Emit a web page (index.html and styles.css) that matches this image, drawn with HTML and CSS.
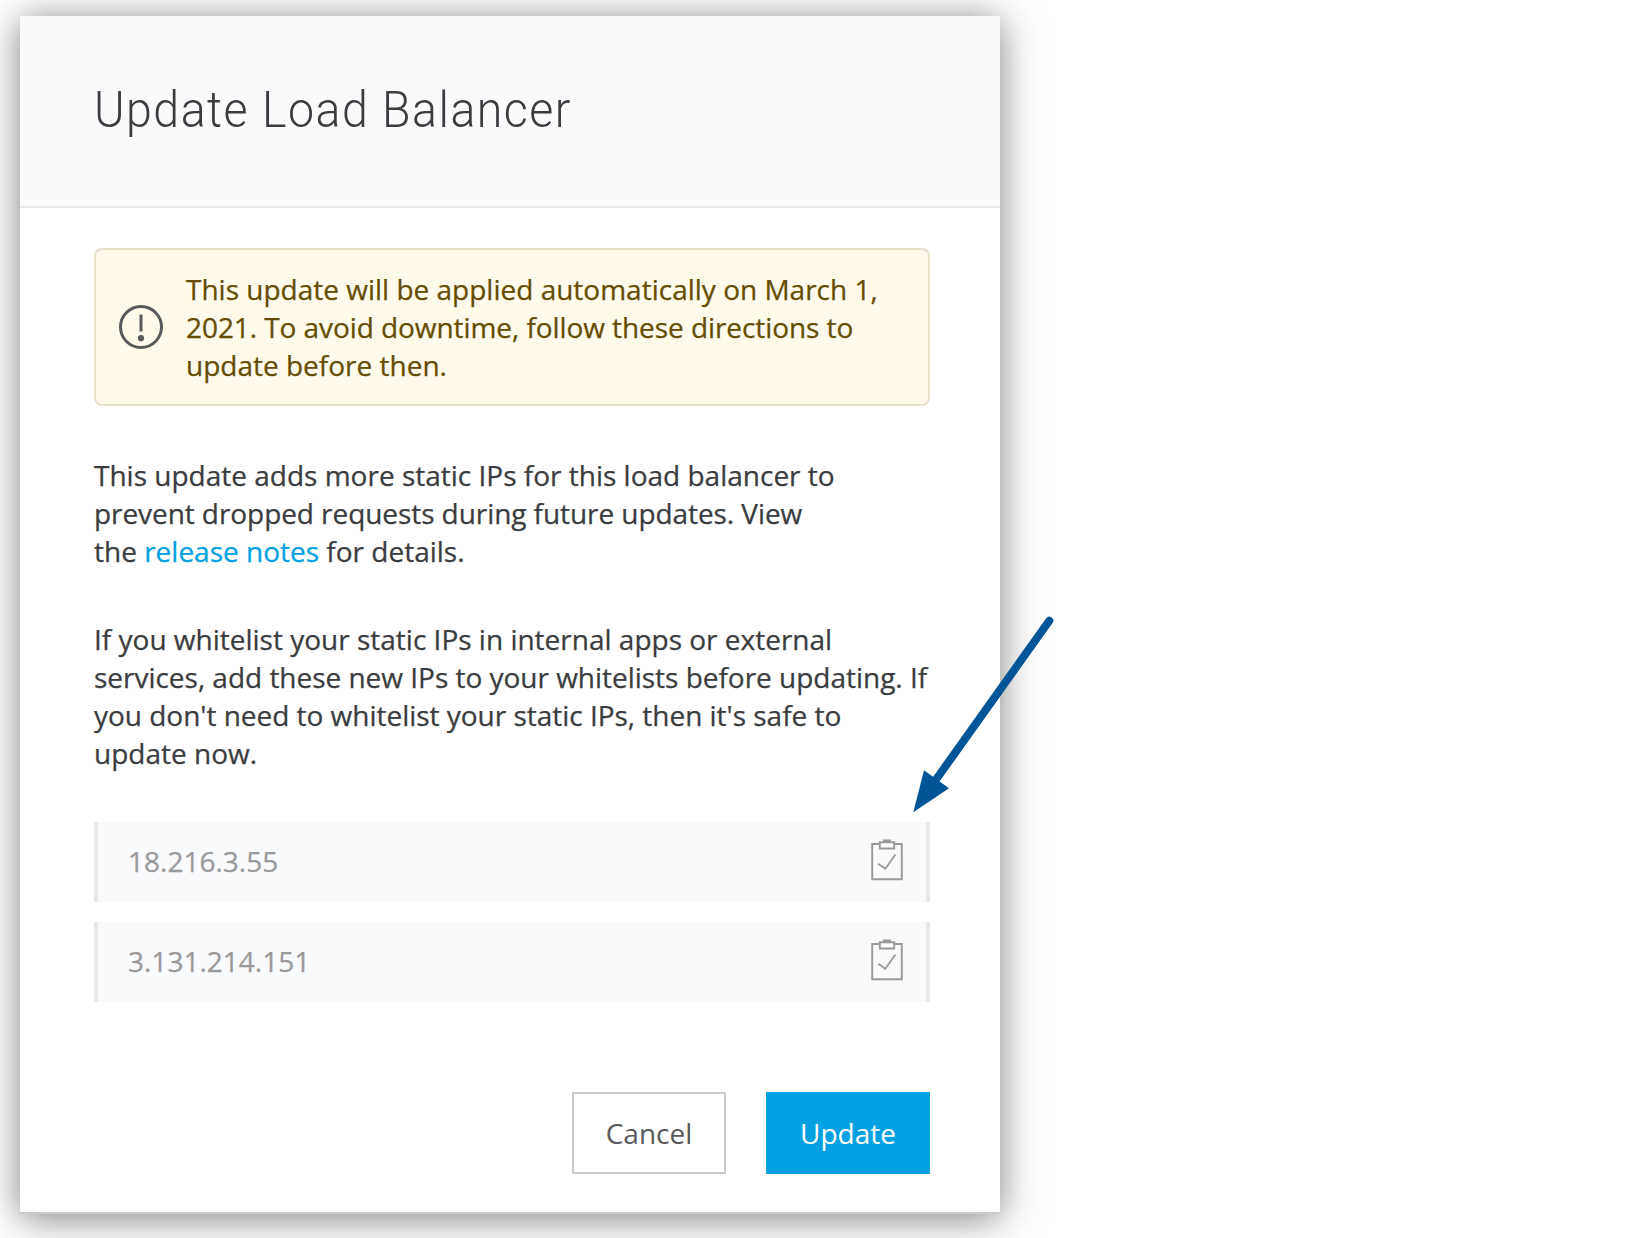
FILE: index.html
```html
<!DOCTYPE html>
<html lang="en">
<head>
<meta charset="utf-8">
<title>Update Load Balancer</title>
<link rel="stylesheet" href="styles.css">
</head>
<body>
<svg class="symbols" aria-hidden="true">
  <symbol id="clipboard" viewBox="0 0 32 42">
    <g fill="none" stroke="#999" stroke-width="1.9">
      <path d="M8.500 5H1.200V40.200H30.800V5H23.500"/>
      <path d="M8.800 3.200H23.200V9.500H8.800Z"/>
      <path d="M7.300 24.700L14.300 29.700L24.500 15.500" stroke-width="1.800"/>
    </g>
    <path d="M12 .5H20V3.500H12Z" fill="#999"/>
  </symbol>
</svg>
<main class="dialog">
  <header class="dialog-header"><h1>Update Load Balancer</h1></header>
  <div class="dialog-body">
    <div class="alert">
      <svg class="alert-icon" viewBox="0 0 44 44">
        <circle cx="22" cy="22" r="20.500" fill="none" stroke="#57595b" stroke-width="3"/>
        <path d="M22 9.500V26.500" stroke="#57595b" stroke-width="3"/>
        <circle cx="22" cy="33.200" r="3.100" fill="#57595b"/>
      </svg>
      <p>This update will be applied automatically on March 1,<br><span class="tight">2021. To avoid downtime, follow these directions to</span><br>update before then.</p>
    </div>
    <p class="copy">This update adds more static IPs for this load balancer to<br><span class="tight">prevent dropped requests during future updates. View</span><br>the <a href="#">release notes</a> for details.</p>
    <p class="copy">If you whitelist your static IPs in internal apps or external<br><span class="snug">services, add these new IPs to your whitelists before updating. If</span><br><span class="snug">you don't need to whitelist your static IPs, then it's safe to</span><br>update now.</p>
    <div class="ips">
      <div class="ip"><span class="address">18.216.3.55</span><svg class="copy-icon"><use href="#clipboard"/></svg></div>
      <div class="ip"><span class="address">3.131.214.151</span><svg class="copy-icon"><use href="#clipboard"/></svg></div>
    </div>
    <div class="actions">
      <button class="btn cancel">Cancel</button>
      <button class="btn update">Update</button>
    </div>
  </div>
</main>
<svg class="arrow" viewBox="905 610 155 210">
  <path d="M1049.300 620.700L935 781" stroke="#005596" stroke-width="8" stroke-linecap="round"/>
  <path d="M913.300 812.200L924 770.300L949 788.300Z" fill="#005596"/>
</svg>
</body>
</html>
```
FILE: styles.css
```css
* { box-sizing: border-box; }
body {
  margin: 0;
  padding: 16px 0 0 20px;
  height: 1238px;
  overflow: hidden;
  background: #fff;
  color: #3a3c3e;
  font: 28px/38px "Open Sans", sans-serif;
}
h1, p { margin: 0; }
.symbols { display: none; }
.dialog {
  width: 980px;
  height: 1198px;
  background: #fff;
  border-bottom: 2px solid #c8cacc;
  box-shadow: 0 4px 36px rgba(0, 0, 0, .5);
}
.dialog-header {
  height: 192px;
  padding: 64px 74px 0;
  background: #f9fafc;
  border-bottom: 2px solid #e6e8ea;
}
h1 {
  font: 300 50px/60px Roboto, sans-serif;
  letter-spacing: 1.6px;
  white-space: nowrap;
  transform: scaleX(.93);
  transform-origin: left;
}
.dialog-body { padding: 40px 70px 0 74px; }
.alert {
  display: flex;
  align-items: center;
  gap: 23px;
  height: 158px;
  padding: 0 23px;
  margin-bottom: 50px;
  border: 2px solid #e8dfc8;
  border-radius: 8px;
  background: #fffaea;
  color: #664c00;
  white-space: nowrap;
}
.alert p, .copy, .address { -webkit-text-stroke: .25px currentColor; }
.tight { letter-spacing: -.07px; }
.snug { letter-spacing: -.02px; }
.alert-icon { flex: none; width: 44px; height: 44px; }
.copy { margin-bottom: 50px; white-space: nowrap; }
.copy a { color: #00a1e2; text-decoration: none; }
.ips { display: grid; gap: 20px; }
.ip {
  display: flex;
  justify-content: space-between;
  align-items: center;
  height: 80px;
  padding: 0 23px 0 30px;
  border: solid #e6e8ea;
  border-width: 0 4px;
  background: #f9fafc;
  color: #999;
}
.address { margin-top: -2px; }
.copy-icon { width: 32px; height: 42px; margin-top: -4px; }
.actions { display: flex; justify-content: flex-end; gap: 40px; margin-top: 90px; }
.btn {
  height: 82px;
  padding: 0;
  font: inherit;
  border: 2px solid #c8cacc;
  background: #fff;
  color: #58595b;
}
.cancel { width: 154px; }
.update { width: 164px; border-color: #03a1e2; background: #03a1e2; color: #fff; }
.arrow { position: absolute; left: 905px; top: 610px; width: 155px; height: 210px; }
```
